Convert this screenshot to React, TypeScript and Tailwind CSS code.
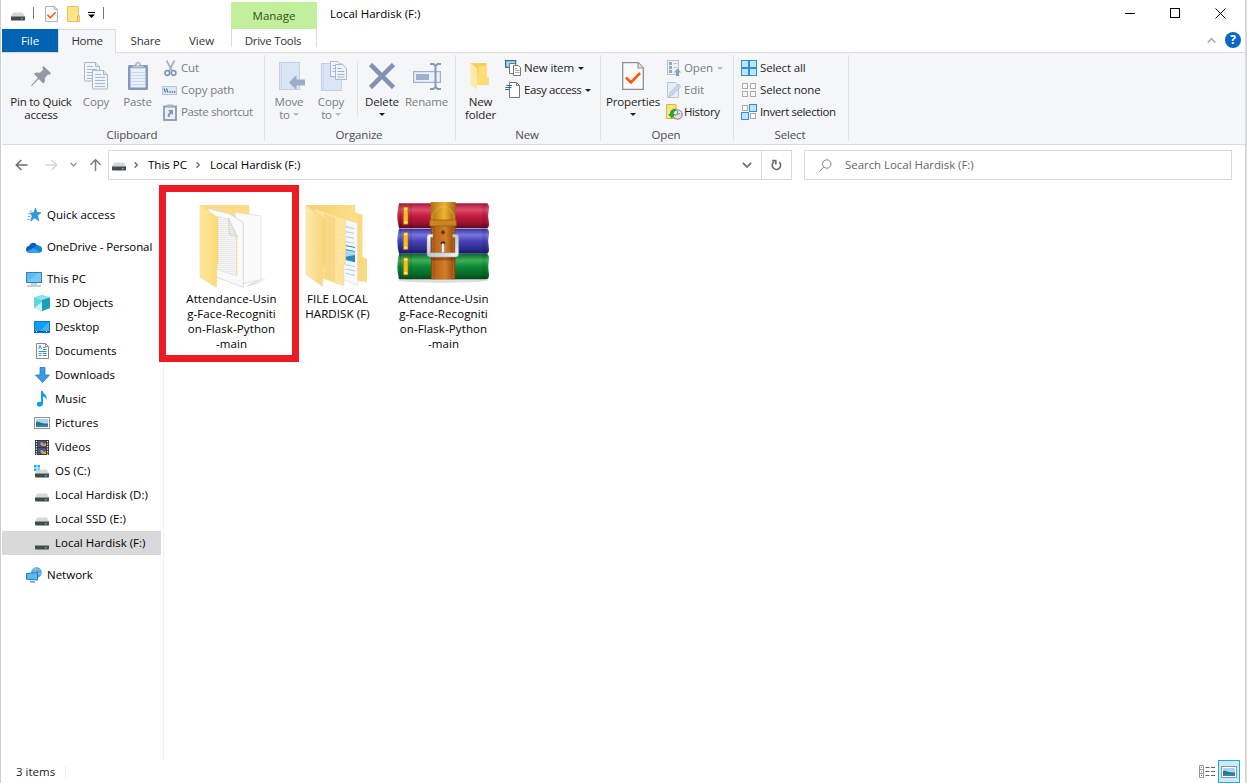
import type { ReactNode } from "react";

const FONT = "font-['Open_Sans','Noto_Sans',sans-serif]";

/* ---------- icons ---------- */

function Drive({ className = "" }: { className?: string }) {
  return (
    <svg width="14" height="9" viewBox="0 0 14 9" className={className}>
      <path d="M2.200.5h9.600L14 4.500H0z" fill="#d5d7d9" />
      <path d="M0 4.200h14v3.500a.8.8 0 0 1-.8.8H.8a.8.8 0 0 1-.8-.8z" fill="#45494c" />
      <path d="M0 4h14v1H0z" fill="#8f9497" />
      <rect x="10" y="6" width="1.600" height="1.400" fill="#35e052" />
    </svg>
  );
}

function Check({ w, h }: { w: number; h: number }) {
  return (
    <svg width={w} height={h} viewBox="0 0 22 28">
      <path d="M.7.7h15.6l5 5v21.6H.7z" fill="#fbfbfb" stroke="#8f8f8f" strokeWidth="1.3" />
      <path d="M16 .7v5.3h5.3" fill="#e6e6e6" stroke="#8f8f8f" strokeWidth="1.1" />
      <path d="M4 15.5l5 5L18 11" fill="none" stroke="#f0590f" strokeWidth="2.600" />
    </svg>
  );
}

const Caret = ({ light = false }: { light?: boolean }) => (
  <svg width="6" height="3" viewBox="0 0 6 3" className="inline-block shrink-0">
    <path d="M0 0h6L3 3z" fill={light ? "#b4b8bd" : "#1e1e1e"} />
  </svg>
);

const Pin = () => (
  <svg width="20" height="21" viewBox="0 0 20 21">
    <path d="M12.600 0L20 7.300l-1.600 1.500-1.400-.3-3.100 3.400.1 3.800-1.800 1.700-4.400-4.300L1.200 19.700l-1.200.5.5-1.300 6.300-6.900L3 8l1.600-1.600 4.300.3 3.200-3L11.300 1.400z" fill="#929ba3" />
  </svg>
);

const Page = ({ x, y }: { x: number; y: number }) => (
  <g transform={`translate(${x} ${y})`}>
    <path d="M.5.5h11l4 4v14.500H.5z" fill="#f1f5fb" stroke="#a9b7d1" />
    <path d="M11.500.5v4h4" fill="#dce5f3" stroke="#a9b7d1" />
    <path d="M3 4.500h6M3 7.500h10M3 10.500h10M3 13.500h10M3 16.500h10" stroke="#a6b6d3" />
  </g>
);

const CopyIcon = () => (
  <svg width="26" height="30" viewBox="0 0 26 30">
    <Page x={1} y={1} />
    <Page x={9} y={9} />
  </svg>
);

const Paste = () => (
  <svg width="22" height="30" viewBox="0 0 22 30">
    <rect x="1" y="4" width="20" height="25" rx="1.500" fill="#8598bd" />
    <rect x="3.500" y="7" width="15" height="19.500" fill="#eaf1fb" />
    <path d="M4 11.500h14M4 14.500h14M4 17.500h14M4 20.500h14M4 23.500h14" stroke="#cbd9ef" />
    <path d="M5 7V4.500h3.500C8.500 0 13.500 0 13.500 4.500H17V7z" fill="#b7c1d1" stroke="#91a0b9" strokeWidth=".7" />
    <circle cx="11" cy="3.500" r="1" fill="#f5f6f7" />
  </svg>
);

const Cut = () => (
  <svg width="13" height="17" viewBox="0 0 13 17" fill="none" stroke="#8297bb">
    <path d="M2.500.5l5.700 10.500M10.500.5L5 11" stroke="#a5b2c8" strokeWidth="1.700" />
    <circle cx="3.300" cy="13" r="2.300" strokeWidth="1.700" />
    <circle cx="9.600" cy="13" r="2.300" strokeWidth="1.700" />
  </svg>
);

const CopyPath = () => (
  <svg width="15" height="9" viewBox="0 0 15 9">
    <rect x=".5" y=".5" width="14" height="8" fill="#dce7f6" stroke="#b5c5df" />
    <path d="M2 2.500l1.500 4M4.500 2.500l1.500 4" stroke="#506a98" strokeWidth="1.100" />
    <path d="M7.500 6h1.300M9.800 6h1.300M12 6h1.300" stroke="#506a98" strokeWidth="1.300" />
  </svg>
);

const PasteShortcut = () => (
  <svg width="14" height="17" viewBox="0 0 14 17">
    <rect x="1" y="2.500" width="12" height="13.500" fill="#eaf1fb" stroke="#8799bb" strokeWidth="1.800" />
    <path d="M4 .5h6v3H4z" fill="#a9b5c8" />
    <path d="M5 6h5v5L8.500 9.500c-1.400 1-1.800 2-1.800 3.500h-2c0-2.500.8-4 2-5z" fill="#8297bd" />
  </svg>
);

const MoveTo = () => (
  <svg width="27" height="30" viewBox="0 0 27 30">
    <rect x="1.500" y="1.500" width="20" height="27" fill="#dae5f5" stroke="#c2d0e5" />
    <path d="M3.500 2v26" stroke="#c9d6eb" />
    <path d="M11 21.500l7.500-7.500v4.500H27v6h-8.500V29z" fill="#9dadca" />
  </svg>
);

const CopyTo = () => (
  <svg width="27" height="32" viewBox="0 0 27 32">
    <rect x="1.500" y="3.500" width="20" height="27" fill="#dae5f5" stroke="#c2d0e5" />
    <path d="M3.500 4v26" stroke="#c9d6eb" />
    <path d="M10.500 1.500h7l3 3v12h-10z" fill="#f1f5fb" stroke="#a9b7d1" />
    <path d="M12.500 5.500h3M12.500 8.500h3M12.500 11.500h3" stroke="#a6b6d3" />
    <path d="M15.500 4.500h7l4 4v11h-11z" fill="#f1f5fb" stroke="#a9b7d1" />
    <path d="M17.500 8.500h4M17.500 11.500h7M17.500 14.500h7M17.500 17h7" stroke="#9dafd0" />
  </svg>
);

const Delete = () => (
  <svg width="26" height="26" viewBox="0 0 26 26">
    <path d="M1.500 1.500l23 23M24.500 1.500l-23 23" stroke="#8292b3" strokeWidth="4.600" />
  </svg>
);

const Rename = () => (
  <svg width="28" height="27" viewBox="0 0 28 27">
    <rect x=".6" y="8.600" width="26.800" height="10.800" fill="#eaf1fa" stroke="#9fb0ce" strokeWidth="1.200" />
    <rect x="3" y="11" width="13" height="6" fill="#9fb0cf" />
    <path d="M17 1h3.500l2 2 2-2H28M17 26h3.500l2-2 2 2H28M22.500 3v21" fill="none" stroke="#8698bb" strokeWidth="2" />
  </svg>
);

const NewFolder = () => (
  <svg width="20" height="28" viewBox="0 0 20 28">
    <path d="M.5 1h16v14l2.500 1v7H3z" fill="#f5cf60" />
    <path d="M9 4h7.500v11h2.500v8H6z" fill="#ffdc75" />
    <path d="M.5 1L7 6.500v21L.5 23z" fill="#ffeaa5" />
  </svg>
);

const NewItem = () => (
  <svg width="16" height="16" viewBox="0 0 16 16">
    <rect x=".6" y=".6" width="10" height="6.800" fill="#a9d4ee" stroke="#2a7199" strokeWidth="1.200" />
    <path d="M4.500 3.500h5l2 2v8h-7z" fill="#fff" stroke="#777" />
    <path d="M8.500 5.500h5l2 2v8h-7z" fill="#fff" stroke="#777" />
    <path d="M10 8.500h2M10 10.500h4.500M10 12.500h4.500" stroke="#a6a6c8" />
  </svg>
);

const EasyAccess = () => (
  <svg width="15" height="16" viewBox="0 0 15 16">
    <path d="M4.500.5h7l3 3v12h-10z" fill="#fff" stroke="#777" />
    <path d="M11.500.5v3h3" fill="none" stroke="#777" />
    <path d="M1.500 3.500H7M.5 5.500h6M0 7.500h4" stroke="#25699e" strokeWidth="1.100" />
  </svg>
);

const OpenIcon = () => (
  <svg width="14" height="16" viewBox="0 0 14 16">
    <rect x=".5" y=".5" width="11" height="14" fill="#eef2f8" stroke="#b4c1d7" />
    <path d="M2 2h3v3H2zM2 6h3v3H2zM2 10h3v3H2z" fill="#95a7c8" />
    <path d="M6.500 3.500h4M6.500 7.500h4" stroke="#b9c5da" />
    <path d="M10.500 8.500L14 12.500h-2V16H9v-3.500H7z" fill="#8d9fbf" />
  </svg>
);

const EditIcon = () => (
  <svg width="14" height="16" viewBox="0 0 14 16">
    <path d="M.5.5h8l3 3v12H.5z" fill="#e9effa" stroke="#b7c4da" />
    <path d="M2 15l1-4.500L11.500 2 14 4.500 5.500 13z" fill="#c9d7eb" stroke="#aab9d2" strokeWidth=".7" />
  </svg>
);

const History = () => (
  <svg width="17" height="16" viewBox="0 0 17 16">
    <path d="M.5.5h9.500v9l1 .5v4.500H.5z" fill="#ffe47b" stroke="#d9b740" />
    <circle cx="11.500" cy="10.500" r="4.700" fill="#e0e3e4" stroke="#777e82" />
    <path d="M11.500 10.500V7M11.500 10.500l2.500-1M9 11.500l2-1" stroke="#777" strokeWidth=".8" />
    <path d="M9.800 4.500C5.500 5 4 7 4 10H2l3.800 4.500L9.500 10H7.300c0-1.700.7-2.800 2.500-3.200z" fill="#22a635" />
  </svg>
);

function Squares({ on }: { on: boolean[] }) {
  const full = on.every(Boolean);
  return (
    <svg width="16" height="16" viewBox="0 0 16 16">
      {on.map((v, i) => {
        const s = v ? 7 : 5;
        const x = (i % 2) * 8 + (v ? 0.5 : 1.5);
        const y = Math.floor(i / 2) * 8 + (v ? 0.5 : 1.5);
        return <rect key={i} x={x} y={y} width={s} height={s} fill={v ? "#bfe4fc" : "#fafafa"} stroke={v ? "#2d8fdd" : "#ababab"} />;
      })}
      {full && <path d="M8 0v16M0 8h16" stroke="#2d8fdd" strokeWidth="1.600" />}
    </svg>
  );
}

const Chevron = ({ dir, color = "#707070", size = 8 }: { dir: "down" | "right" | "up"; color?: string; size?: number }) => (
  <svg width={size} height={size} viewBox="0 0 8 8" fill="none" stroke={color} strokeWidth="1.400">
    <path d={dir === "down" ? "M.7 2.300L4 5.600l3.300-3.300" : dir === "up" ? "M.7 5.800L4 2.400l3.300 3.400" : "M2.600 1.300l2.700 2.700-2.700 2.700"} />
  </svg>
);

const Arrow = ({ color, className }: { color: string; className?: string }) => (
  <svg width="13" height="12" viewBox="0 0 13 12" fill="none" stroke={color} strokeWidth="1.500" className={className}>
    <path d="M12.500 6H1.500M6.300 1L1.300 6l5 5" />
  </svg>
);

/* ---------- navigation pane icons ---------- */

const Star = () => (
  <svg width="14" height="14" viewBox="0 0 14 14">
    <path d="M8.500 0l1.300 4.500H14L10.500 7.500l1.300 5.500-4-3.200L3.500 13l1.800-5L3 5l3.800-.2z" fill="#2a9ae8" stroke="#197cc4" strokeWidth=".6" />
    <path d="M2.500 3h3M1 5.500h2.500M.5 8.500h3M0 11.500h2.500" stroke="#57ace8" strokeWidth=".8" />
  </svg>
);
const Cloud = () => (
  <svg width="16" height="11" viewBox="0 0 16 11">
    <path d="M3 4C4 .5 9-1 11 3.300c3 .2 5 1.700 5 4.200 0 2-1.500 3.300-3.500 3.300H3.300C1.500 10.800 0 9.500 0 7.500 0 5.500 1.200 4.200 3 4z" fill="#0a5fb8" />
    <path d="M11 3.300c3 .2 5 1.700 5 4.200 0 1.300-.5 2.200-1.500 2.800L7 6z" fill="#1684d8" />
    <path d="M1 9.600L7.500 6l7 4.200c-.6.4-1.300.6-2 .6H3.300c-1 0-1.800-.5-2.300-1.200z" fill="#2fa5ee" />
  </svg>
);
const PC = () => (
  <svg width="16" height="15" viewBox="0 0 16 15">
    <rect x=".5" y=".5" width="15" height="10" fill="#5abcf8" stroke="#437fa5" />
    <path d="M1 10L12 1h3v9z" fill="#84d0ff" opacity=".6" />
    <path d="M5 12h6M1 14h14" stroke="#8ca0ad" />
  </svg>
);
const Cube = () => (
  <svg width="16" height="16" viewBox="0 0 16 16">
    <path d="M8 0l8 2.500v10.500L8 16 0 13V2.500z" fill="#63d3de" />
    <path d="M8 0l8 2.500L8 5 0 2.500z" fill="#8fe3ea" />
    <path d="M8 5l8-2.500V13l-8 3z" fill="#1d9fb6" />
    <path d="M0 13L8 7v9z" fill="#c9f1f3" />
  </svg>
);
const DesktopIcon = () => (
  <svg width="16" height="12" viewBox="0 0 16 12">
    <rect x=".5" y=".5" width="15" height="11" fill="#139df4" stroke="#0877c4" />
    <path d="M6 10L15 1v9z" fill="#3eb4ff" />
    <path d="M1 10.500h14" stroke="#16517e" />
    <path d="M2 10.500h1M12 10.500h1" stroke="#fff" />
  </svg>
);
const DocIcon = () => (
  <svg width="13" height="16" viewBox="0 0 13 16">
    <path d="M.5.5h9l3 3v12H.5z" fill="#fff" stroke="#858b90" />
    <path d="M9.500.5v3h3" fill="none" stroke="#858b90" />
    <path d="M2.500 6L4 2.500 5.500 6M7 4.500h2.500M7 6.500h3.500M2.500 8.500h8M2.500 10.500h3M2.500 12.500h3M7 10.500h3.500M7 12.500h3.500" stroke="#3a91c7" fill="none" />
  </svg>
);
const Down = () => (
  <svg width="15" height="16" viewBox="0 0 15 16">
    <path d="M5 .5h5V8h4.500l-7 7.500L.5 8H5z" fill="#3b9bea" stroke="#2879c2" strokeWidth=".8" />
  </svg>
);
const Note = () => (
  <svg width="12" height="16" viewBox="0 0 12 16">
    <path d="M5 0h1.800c.3 3 5.200 4.300 3.700 8.800C10 6.500 8.500 6 7 5.500v7.300C7 16 1 17 .8 13.600.6 11.300 3 10.500 5 11z" fill="#109cf4" />
  </svg>
);
const Picture = () => (
  <svg width="16" height="12" viewBox="0 0 16 12">
    <rect x=".5" y=".5" width="15" height="11" fill="#fff" stroke="#8e9498" />
    <path d="M2 2h12v8H2z" fill="#a3d7f5" />
    <path d="M2 5c3-1 5 2 12 1.500V10H2z" fill="#356f78" />
    <path d="M2 8.500c5-1.500 8 0 12-.5v2H2z" fill="#2d83bd" />
  </svg>
);
const Film = () => (
  <svg width="14" height="15" viewBox="0 0 14 15">
    <rect width="14" height="15" fill="#38373c" />
    <path d="M1.500 1v14M12.500 1v14" stroke="#eee" strokeWidth="1.200" strokeDasharray="1.300 1.200" />
    <path d="M3 1h8v6H3zM3 8h8v6H3z" fill="#38589d" />
    <path d="M5 4l2-2 2 2 2-1v3H7zM5 11l2-1 2 2 2-1v3H7z" fill="#d7a735" />
    <path d="M5 3h1M8 4h2M8 10h2" stroke="#de4b35" />
  </svg>
);
const OsDrive = () => (
  <div className="flex w-4 flex-col">
    <svg width="6" height="6" viewBox="0 0 6 6">
      <path d="M0 0h2.600v2.600H0zM3.400 0H6v2.600H3.400zM0 3.400h2.600V6H0zM3.400 3.400H6V6H3.400z" fill="#18b2ef" />
    </svg>
    <Drive className="-mt-[2px] ml-px" />
  </div>
);
const NetworkIcon = () => (
  <svg width="16" height="16" viewBox="0 0 16 16">
    <circle cx="10.500" cy="5.400" r="5.300" fill="#5aa6d5" />
    <path d="M6.500 3c3-3 5 1 8-.5M6 6c3-2 6 2 9.500 0M10.500 0c-3 4-1 8 1 11" stroke="#a3cde4" fill="none" />
    <path d="M.5 6.500l11-1v7.500l-11-.8z" fill="#55baf7" stroke="#2b79b3" />
    <path d="M4 14.500l5 .8" stroke="#6c94ab" strokeWidth="1.400" />
  </svg>
);

/* ---------- large file icons ---------- */

const DocFolder = () => (
  <svg width="70" height="85" viewBox="120 60 210 255">
    <defs>
      <linearGradient id="ff" x1="0" x2="1"><stop stopColor="#ffe7a2" /><stop offset="1" stopColor="#fbd974" /></linearGradient>
      <linearGradient id="sh" x1="0" x2="1"><stop stopColor="#999" stopOpacity=".5" /><stop offset="1" stopColor="#aaa" stopOpacity="0" /></linearGradient>
      <pattern id="lines" width="8" height="6" patternUnits="userSpaceOnUse">
        <rect width="8" height="6" fill="#fafafa" />
        <path d="M0 1l8 2" stroke="#d3d3d3" strokeWidth="1.500" />
      </pattern>
    </defs>
    <path d="M262 312l48-30 20 8-38 14z" fill="url(#sh)" />
    <path d="M126 66h148v180H126z" fill="#fbdc87" />
    <path d="M230 88l79 11v191l-55 12z" fill="#fbfbfb" stroke="#d6d6d6" strokeWidth="2" />
    <path d="M150 76l65 16 41 27v194l-106-40z" fill="#fafafa" stroke="#cdcdcd" strokeWidth="2" />
    <path d="M176 100l36 8 24 53v118l-60-20z" fill="url(#lines)" stroke="#d3d3d3" strokeWidth="1.500" />
    <path d="M212 106l26 55-24-7z" fill="#e8e8e8" stroke="#b8b8b8" strokeWidth="1.500" />
    <path d="M236 162v112" stroke="#f8d880" strokeWidth="2.500" />
    <path d="M126 66l54 38v136l-4 5v66l-4 1-46-30z" fill="url(#ff)" stroke="#efcc70" strokeWidth="1" />
  </svg>
);

const FullFolder = () => (
  <svg width="66" height="84" viewBox="12 24 198 252">
    <defs>
      <linearGradient id="fb" x1="0" x2="1"><stop stopColor="#f4cf73" /><stop offset="1" stopColor="#ffe18d" /></linearGradient>
      <linearGradient id="fl" x1="0" x2="1"><stop stopColor="#ffe9ac" /><stop offset="1" stopColor="#f7d57c" /></linearGradient>
    </defs>
    <path d="M18 30h147v22l22 8v128l14 8v65l-60-5z" fill="url(#fb)" />
    <path d="M110 65l63 20v187l-63-25z" fill="#f8f8f8" stroke="#d5d5d5" strokeWidth="1.500" />
    <path d="M137 95l25 6M137 110l25 5M137 125l25 5M137 140l25 4M137 209l28 6M137 222l28 6M137 235l28 6" stroke="#79b7d8" strokeWidth="2" />
    <path d="M136 150l29 6v3l-29-6z" fill="#1683d3" />
    <path d="M136 162l29 6v34l-29-7z" fill="#2b87be" />
    <path d="M136 165l29 5v10l-29 5z" fill="#a6d8ec" />
    <path d="M187 60v125l14 8v67l-28-5V56z" fill="#f9d983" />
    <path d="M44 41l93 31v132l-5 6v63l-88-32z" fill="#ffe49b" stroke="#eccb72" strokeWidth="1" />
    <path d="M72 55l33 15v190l-33-11z" fill="#f4d079" opacity=".6" />
    <path d="M18 31l55 39v138l-5 8v58l-50-34z" fill="url(#fl)" stroke="#e9ca78" strokeWidth="1" />
  </svg>
);

function Archive() {
  const books = [
    { y: 25, h: 75, g: "red" },
    { y: 101, h: 75, g: "blue" },
    { y: 177, h: 76, g: "green" },
  ];
  return (
    <svg width="96" height="84" viewBox="285 15 288 252">
      <defs>
        <linearGradient id="red" x2="0" y2="1"><stop stopColor="#a31b3b" /><stop offset=".25" stopColor="#dd4c69" /><stop offset=".5" stopColor="#c51e43" /><stop offset=".8" stopColor="#9a1231" /><stop offset="1" stopColor="#5f0822" /></linearGradient>
        <linearGradient id="blue" x2="0" y2="1"><stop stopColor="#37339a" /><stop offset=".25" stopColor="#7875df" /><stop offset=".5" stopColor="#4642b8" /><stop offset=".8" stopColor="#302b8e" /><stop offset="1" stopColor="#1c1761" /></linearGradient>
        <linearGradient id="green" x2="0" y2="1"><stop stopColor="#0b6c2b" /><stop offset=".25" stopColor="#3fae59" /><stop offset=".5" stopColor="#0c8a37" /><stop offset=".8" stopColor="#066a27" /><stop offset="1" stopColor="#034719" /></linearGradient>
        <linearGradient id="belt" x1="0" x2="1"><stop stopColor="#8e460b" /><stop offset=".2" stopColor="#bd671a" /><stop offset=".6" stopColor="#cf7f28" /><stop offset="1" stopColor="#8c430b" /></linearGradient>
        <linearGradient id="gold" x1="0" x2="1"><stop stopColor="#b0700f" /><stop offset=".55" stopColor="#eeb336" /><stop offset="1" stopColor="#a3650e" /></linearGradient>
        <linearGradient id="steel" x1="0" x2="1" y2="1"><stop stopColor="#fff" /><stop offset=".5" stopColor="#c3c8cf" /><stop offset="1" stopColor="#f5f6f8" /></linearGradient>
      </defs>
      <ellipse cx="430" cy="256" rx="135" ry="7" fill="#9ba39e" opacity=".35" />
      {books.map((b) => (
        <g key={b.g}>
          <path d={`M297 ${b.y}h265q5 4 5 12q-5 25 0 ${b.h - 24}q0 9-5 12H297q-10-${b.h / 2} 0-${b.h}`} fill={`url(#${b.g})`} />
          <path d={`M301 ${b.y}v${b.h}M333 ${b.y}v${b.h}M549 ${b.y}v${b.h}M555 ${b.y}v${b.h}`} stroke="#000" strokeOpacity=".25" strokeWidth="2" />
          <rect x="310" y={b.y + 11} width="14" height="52" fill="#f5bd1e" stroke="#a25c0c" strokeWidth="1.500" />
          <path d={`M312 ${b.y + 17}h10M312 ${b.y + 57}h10`} stroke="#fff17e" strokeWidth="5" />
        </g>
      ))}
      <path d="M393 22h73v231h-73z" fill="url(#belt)" />
      <path d="M392 22h75v70h-75z" fill="url(#gold)" />
      <path d="M396 75V60q33-50 66 0v15" fill="none" stroke="#fde16c" strokeWidth="2" strokeDasharray="4 3" />
      <path d="M389 75h80v18h-80z" fill="#c98522" stroke="#8c5411" strokeWidth="2" />
      <path d="M398 100v150M461 100v150" stroke="#f0a650" strokeWidth="1.500" strokeDasharray="4 3" />
      <circle cx="429" cy="112" r="6" fill="#5c3412" stroke="#a66520" strokeWidth="2" />
      <path d="M399 118h-10q-8 0-8 8v50q0 10 9 10h77q9 0 9-10v-50q0-8-8-8h-10v9h7v46h-73v-46h7z" fill="url(#steel)" stroke="#8a9099" strokeWidth="1.500" />
      <circle cx="429" cy="146" r="7" fill="#4c2a12" />
      <path d="M425 148q4-7 8 0v22q-4 9-8 0z" fill="#f6f7f9" stroke="#777e86" strokeWidth="1.500" />
      <path d="M393 188h73v8h-73z" fill="#5e2b06" opacity=".45" />
    </svg>
  );
}

/* ---------- ribbon parts ---------- */

function Big({ icon, lines, w, dim = false, caret }: { icon: ReactNode; lines: string[]; w: string; dim?: boolean; caret?: "below" | "inline" }) {
  return (
    <div className={`flex shrink-0 flex-col items-center ${w} ${dim ? "text-[#7b7d80]" : "text-[#1e1e1e]"}`}>
      <div className="mb-[3px] flex h-8 items-center justify-center">{icon}</div>
      {lines.map((l, i) => (
        <div key={l} className="flex h-[13px] items-center gap-[3px] whitespace-nowrap leading-[13px]">
          {l}
          {caret === "inline" && i === lines.length - 1 && <Caret light={dim} />}
        </div>
      ))}
      {caret === "below" && <div className="flex h-[13px] items-center"><Caret /></div>}
    </div>
  );
}

function Small({ icon, label, iw, dim = false, caret = false, tight = false }: { icon: ReactNode; label: string; iw: string; dim?: boolean; caret?: boolean; tight?: boolean }) {
  return (
    <div className={`flex h-[22px] items-center whitespace-nowrap ${dim ? "text-[#7b7d80]" : "text-[#1e1e1e]"}`}>
      <span className={`flex shrink-0 items-center ${iw}`}>{icon}</span>
      <span className={tight ? "tracking-[-0.4px]" : ""}>{label}</span>
      {caret && <span className="ml-1 flex"><Caret light={dim} /></span>}
    </div>
  );
}

function Group({ label, w, children }: { label: string; w: string; children: ReactNode }) {
  return (
    <section className={`flex shrink-0 flex-col ${w}`}>
      <div className="flex h-[75px]">{children}</div>
      <div className="pr-[2px] text-center leading-[14px] text-[#4a4c4f]">{label}</div>
    </section>
  );
}

const Sep = () => <div className="mt-0.5 h-[86px] w-px shrink-0 bg-[#e0e1e3]" />;

/* ---------- navigation pane ---------- */

type Item = { label: string; icon: ReactNode; root?: boolean; gap?: boolean; selected?: boolean };

const items: Item[] = [
  { label: "Quick access", icon: <Star />, root: true },
  { label: "OneDrive - Personal", icon: <Cloud />, root: true, gap: true },
  { label: "This PC", icon: <PC />, root: true, gap: true },
  { label: "3D Objects", icon: <Cube /> },
  { label: "Desktop", icon: <DesktopIcon /> },
  { label: "Documents", icon: <DocIcon /> },
  { label: "Downloads", icon: <Down /> },
  { label: "Music", icon: <Note /> },
  { label: "Pictures", icon: <Picture /> },
  { label: "Videos", icon: <Film /> },
  { label: "OS (C:)", icon: <OsDrive /> },
  { label: "Local Hardisk (D:)", icon: <Drive className="mt-1" /> },
  { label: "Local SSD (E:)", icon: <Drive className="mt-1" /> },
  { label: "Local Hardisk (F:)", icon: <Drive className="mt-1" />, selected: true },
  { label: "Network", icon: <NetworkIcon />, root: true, gap: true },
];

const archiveName = ["Attendance-Usin", "g-Face-Recogniti", "on-Flask-Python", "-main"];

function FileTile({ icon, lines }: { icon: ReactNode; lines: string[] }) {
  return (
    <div className="flex w-[106px] flex-col items-center">
      <div className="flex h-[91px] items-start justify-center">{icon}</div>
      {lines.map((l) => (
        <div key={l} className="whitespace-nowrap pl-px leading-[15px] tracking-[0.1px]">{l}</div>
      ))}
    </div>
  );
}

export default function App() {
  return (
    <div className={`flex h-[783px] w-[1247px] flex-col overflow-hidden border-l border-r-2 border-l-[#cfcfcf] border-r-[#d8d8d8] bg-white pl-px text-[11.500px] text-black ${FONT}`}>
      {/* title bar */}
      <header className="flex h-[29px] shrink-0">
        <div className="flex w-[229px] items-start pt-[6px] pl-[9px]">
          <Drive className="mt-[6px]" />
          <div className="ml-[8px] mt-px h-[12px] w-px bg-[#777]" />
          <div className="ml-[11px]"><Check w={13} h={16} /></div>
          <svg className="ml-[9px]" width="13" height="16" viewBox="0 0 13 16">
            <path d="M.5.5h11V10h1v5.500H.5z" fill="#ffe48a" stroke="#eac35a" />
            <path d="M10.500 15v-5h2" stroke="#d8b250" fill="none" />
          </svg>
          <svg className="ml-[8px] mt-[6px]" width="7" height="6" viewBox="0 0 7 6">
            <path d="M0 0h7v1H0zM0 2.500h7L3.500 6z" fill="#000" />
          </svg>
          <div className="ml-[8px] mt-px h-[12px] w-px bg-[#777]" />
        </div>
        <div className="mt-[2px] flex h-[27px] w-[86px] items-center justify-center bg-[#c1ef9c] text-[#33501e]">Manage</div>
        <div className="flex h-[28px] grow items-center pl-[13px]">Local Hardisk (F:)</div>
        <div className="flex items-start pt-[8px] pr-[19px]">
          <svg width="101" height="11" viewBox="0 0 101 11" fill="none" stroke="#000">
            <path d="M0 5.500h10M90.500.5l10 10M100.500.5l-10 10" />
            <rect x="45.500" y=".5" width="9" height="9" />
          </svg>
        </div>
      </header>

      {/* tabs */}
      <nav className="flex h-[24px] shrink-0 items-stretch border-b border-[#dadbdc] text-[#333]">
        <div className="flex w-[56px] items-center justify-center bg-[#0063b1] text-white">File</div>
        <div className="-mb-px flex w-[58px] items-center justify-center border border-b-0 border-[#dadbdc] bg-[#f5f6f7] pb-px tracking-[-0.35px]">Home</div>
        <div className="flex w-[59px] items-center justify-center tracking-[-0.2px]">Share</div>
        <div className="flex w-[56px] items-center justify-center pr-[3px]">View</div>
        <div className="mb-[5px] flex w-[86px] items-start justify-center border-x border-[#dcdcdc] pt-[4px] pr-[2px] leading-4 tracking-[-0.3px]">Drive Tools</div>
        <div className="flex grow items-center justify-end gap-[9px] pr-[4px] pb-px">
          <Chevron dir="up" color="#aaa" size={9} />
          <div className="flex size-4 items-center justify-center rounded-full bg-[#0669c5] text-[12px] font-bold text-white">?</div>
        </div>
      </nav>

      {/* ribbon */}
      <div className="flex h-[92px] shrink-0 border-b border-[#dadbdc] bg-[#f5f6f7] tracking-[-0.15px]">
        <Group label="Clipboard" w="w-[262px]">
          <div className="flex pt-[7px] pl-px">
            <Big w="w-[76px] tracking-[-0.25px]" icon={<Pin />} lines={["Pin to Quick", "access"]} />
            <Big w="w-[33px] pl-px" dim icon={<CopyIcon />} lines={["Copy"]} />
            <Big w="w-[50px] pl-px" dim icon={<Paste />} lines={["Paste"]} />
          </div>
          <div className="pt-1">
            <Small iw="w-[19px] pl-[2px]" dim icon={<Cut />} label="Cut" />
            <Small iw="w-[19px]" dim icon={<CopyPath />} label="Copy path" />
            <Small iw="w-[19px] pl-px" dim icon={<PasteShortcut />} label="Paste shortcut" tight />
          </div>
        </Group>
        <Sep />
        <Group label="Organize" w="w-[190px]">
          <div className="flex pt-[7px] pl-[3px]">
            <Big w="w-[42px]" dim icon={<span className="pl-[5px]"><MoveTo /></span>} lines={["Move", "to"]} caret="inline" />
            <Big w="w-[42px]" dim icon={<span className="pl-[5px]"><CopyTo /></span>} lines={["Copy", "to"]} caret="inline" />
            <div className="mt-[2px] ml-[5px] mr-[3px] h-[55px] w-px bg-[#e0e1e3]" />
            <Big w="w-[42px]" icon={<Delete />} lines={["Delete"]} caret="below" />
            <Big w="w-[47px]" dim icon={<Rename />} lines={["Rename"]} />
          </div>
        </Group>
        <Sep />
        <Group label="New" w="w-[144px]">
          <div className="flex pt-[7px] pl-[2px]">
            <Big w="w-[45px]" icon={<span className="pr-[2px]"><NewFolder /></span>} lines={["New", "folder"]} />
          </div>
          <div className="pl-[2px] pt-1">
            <Small iw="w-[19px]" icon={<NewItem />} label="New item" caret />
            <Small iw="w-[19px]" icon={<EasyAccess />} label="Easy access" caret tight />
          </div>
        </Group>
        <Sep />
        <Group label="Open" w="w-[132px]">
          <div className="flex pt-[7px] pl-[3px]">
            <Big w="w-[58px]" icon={<Check w={22} h={28} />} lines={["Properties"]} caret="below" />
          </div>
          <div className="pl-[4px] pt-1">
            <Small iw="w-[18px] pl-[1px]" dim icon={<OpenIcon />} label="Open" caret />
            <Small iw="w-[18px] pl-[1px]" dim icon={<EditIcon />} label="Edit" />
            <Small iw="w-[18px]" icon={<History />} label="History" tight />
          </div>
        </Group>
        <Sep />
        <Group label="Select" w="w-[114px]">
          <div className="pl-[7px] pt-1">
            <Small iw="w-[19px]" icon={<Squares on={[true, true, true, true]} />} label="Select all" />
            <Small iw="w-[19px]" icon={<Squares on={[false, false, false, false]} />} label="Select none" />
            <Small iw="w-[19px]" icon={<Squares on={[false, true, true, false]} />} label="Invert selection" tight />
          </div>
        </Group>
        <Sep />
      </div>

      {/* address row */}
      <div className="flex h-[39px] shrink-0 items-start pt-[5px]">
        <div className="flex h-[30px] w-[106px] items-center pl-[13px]">
          <Arrow color="#6b6b6b" />
          <Arrow color="#d6d6d6" className="ml-[17px] rotate-180" />
          <span className="-mt-[2px] ml-[12px]"><Chevron dir="down" color="#888" size={7} /></span>
          <Arrow color="#7b7b7b" className="ml-[12px] rotate-90" />
        </div>
        <div className="flex h-[30px] w-[684px] items-center border border-[#d9d9d9]">
          <Drive className="ml-[3px] mt-[3px]" />
          <span className="ml-[6px]"><Chevron dir="right" /></span>
          <span className="ml-[8px] w-[39px] whitespace-nowrap">This PC</span>
          <span className="ml-[7px]"><Chevron dir="right" /></span>
          <span className="ml-[8px] grow">Local Hardisk (F:)</span>
          <span className="mr-[9px]"><Chevron dir="down" size={10} /></span>
          <div className="flex h-full w-[30px] items-center justify-center border-l border-[#d9d9d9]">
            <svg width="11" height="12" viewBox="0 0 11 12" fill="none" stroke="#6c6c6c" strokeWidth="1.600">
              <path d="M8.300 3.200A4.200 4.200 0 1 1 3 2.800" />
              <path d="M1 1.600h3.800v3.800" />
            </svg>
          </div>
        </div>
        <div className="ml-[12px] flex h-[30px] w-[428px] items-center border border-[#d9d9d9] text-[#666]">
          <svg className="ml-[14px]" width="13" height="13" viewBox="0 0 13 13" fill="none" stroke="#888">
            <circle cx="7.800" cy="5" r="4.200" />
            <path d="M4.800 8L.5 12.500" />
          </svg>
          <span className="ml-[13px] tracking-[-0.05px]">Search Local Hardisk (F:)</span>
        </div>
      </div>

      {/* body */}
      <div className="flex h-[577px] shrink-0">
        <aside className="w-[162px] shrink-0 border-r border-[#f2f2f2] pt-[19px]">
          {items.map((it) => (
            <div key={it.label} className={`flex h-6 w-[159px] items-center whitespace-nowrap ${it.gap ? "mt-2" : ""} ${it.root ? "pl-6" : "pl-8"} ${it.selected ? "bg-[#d9d9d9]" : ""}`}>
              <span className="flex w-4 shrink-0 justify-center">{it.icon}</span>
              <span className={it.label.length > 18 ? "ml-[5px] tracking-[-0.1px]" : "ml-[5px]"}>{it.label}</span>
            </div>
          ))}
        </aside>
        <main className="relative flex grow items-start pl-[14px] pt-[16px]">
          <FileTile icon={<span className="mt-[3px] ml-[4px]"><DocFolder /></span>} lines={archiveName} />
          <FileTile icon={<span className="mt-[3px]"><FullFolder /></span>} lines={["FILE LOCAL", "HARDISK (F)"]} />
          <FileTile icon={<Archive />} lines={archiveName} />
          <div className="absolute top-px -left-[5px] h-[177px] w-[140px] border-[7px] border-[#ed1c24]" />
        </main>
      </div>

      {/* status bar */}
      <footer className="flex h-[21px] shrink-0 items-center justify-between pl-[14px] text-[#222]">
        <span className="flex items-center">3 items<span className="ml-[10px] h-3 w-px bg-[#ececec]" /></span>
        <div className="flex items-center gap-[2px] pr-[5px]">
          <svg width="17" height="13" viewBox="0 0 17 13" fill="none">
            <path d="M.5.5h4v12h-4zM.5 4.500h4M.5 8.500h4" stroke="#999" />
            <path d="M6.500 2.500h4M12 2.500h4M6.500 6.500h4M12 6.500h4M6.500 10.500h4M12 10.500h4" stroke="#666" />
            <path d="M2 2.500h1" stroke="#999" />
            <path d="M2 6.500h1" stroke="#268bd6" />
            <path d="M2 10.500h1" stroke="#b33" />
          </svg>
          <div className="flex h-[23px] w-[22px] items-center justify-center border border-[#2aa4dd] bg-[#cceaf8]"><Picture /></div>
        </div>
      </footer>
    </div>
  );
}
